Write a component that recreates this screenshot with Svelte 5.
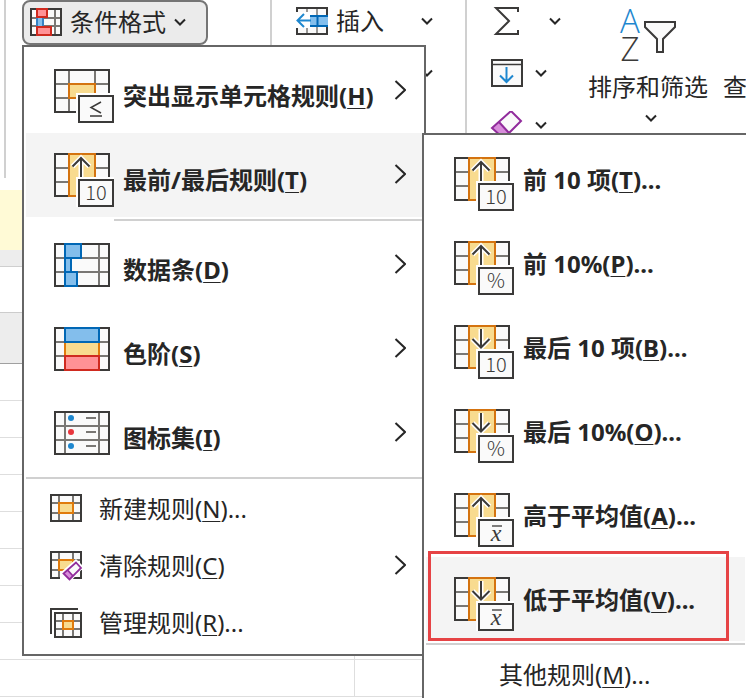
<script lang="ts">
  type IconName = string;

  interface MenuItem {
    id: string;
    label: string;
    key: string;
    suffix?: string;
    icon?: IconName;
    arrow?: 'up' | 'down';
    badge?: string;
    submenu?: boolean;
  }

  const galleryItems: MenuItem[] = [
    { id: 'highlight', label: '突出显示单元格规则', key: 'H', icon: 'highlight', badge: '≤', submenu: true },
    { id: 'top-bottom', label: '最前/最后规则', key: 'T', icon: 'rank', arrow: 'up', badge: '10', submenu: true },
    { id: 'data-bars', label: '数据条', key: 'D', icon: 'bars', submenu: true },
    { id: 'color-scales', label: '色阶', key: 'S', icon: 'scales', submenu: true },
    { id: 'icon-sets', label: '图标集', key: 'I', icon: 'sets', submenu: true },
  ];

  const manageItems: MenuItem[] = [
    { id: 'new', label: '新建规则', key: 'N', suffix: '...', icon: 'new' },
    { id: 'clear', label: '清除规则', key: 'C', icon: 'clear', submenu: true },
    { id: 'manage', label: '管理规则', key: 'R', suffix: '...', icon: 'manage' },
  ];

  const rankItems: MenuItem[] = [
    { id: 'top10', label: '前 10 项', key: 'T', suffix: '...', icon: 'rank', arrow: 'up', badge: '10' },
    { id: 'top10p', label: '前 10%', key: 'P', suffix: '...', icon: 'rank', arrow: 'up', badge: '%' },
    { id: 'bottom10', label: '最后 10 项', key: 'B', suffix: '...', icon: 'rank', arrow: 'down', badge: '10' },
    { id: 'bottom10p', label: '最后 10%', key: 'O', suffix: '...', icon: 'rank', arrow: 'down', badge: '%' },
    { id: 'above', label: '高于平均值', key: 'A', suffix: '...', icon: 'rank', arrow: 'up', badge: 'x' },
    { id: 'below', label: '低于平均值', key: 'V', suffix: '...', icon: 'rank', arrow: 'down', badge: 'x' },
  ];

  const moreRules: MenuItem = { id: 'more', label: '其他规则', key: 'M', suffix: '...' };

  const sheetRows = Array.from({ length: 9 }, (_, i) => i);

  let openId = $state('top-bottom');
  let hoveredId = $state('below');
  let menuOpen = $state(true);
</script>

{#snippet chevronDown()}
  <svg class="chevron-down" width="12" height="8" viewBox="0 0 12 8" aria-hidden="true">
    <path d="M1 1.5L6 6.5L11 1.5" fill="none" stroke="#262626" stroke-width="2" />
  </svg>
{/snippet}

{#snippet chevronRight()}
  <svg class="chevron-right" width="12" height="20" viewBox="0 0 12 20" aria-hidden="true">
    <path d="M1.5 1L11 10L1.5 19" fill="none" stroke="#262626" stroke-width="2" />
  </svg>
{/snippet}

{#snippet largeIcon(item: MenuItem)}
  <svg class="icon" width="60" height="54" viewBox="0 0 60 54" aria-hidden="true">
    <rect x="1" y="1" width="54" height="42" fill="#fafafa" />
    <path d="M1 15H55M1 29H55" stroke="#797774" stroke-width="2" />
    {#if item.icon === 'highlight' || item.icon === 'rank'}
      <path d="M15 1V43M41 1V43" stroke="#797774" stroke-width="2" />
    {:else}
      <path d="M11 1V43M45 1V43" stroke="#797774" stroke-width="2" />
    {/if}
    <rect x="1" y="1" width="54" height="42" fill="none" stroke="#3b3a39" stroke-width="2" />

    {#if item.icon === 'highlight'}
      <rect x="15" y="15" width="26" height="14" fill="#f8db8f" stroke="#d4730f" stroke-width="2" />
    {:else if item.icon === 'rank'}
      <rect x="15" y="1" width="26" height="42" fill="#f8db8f" stroke="#d4730f" stroke-width="2" />
      {@const arrowPath = item.arrow === 'up' ? 'M27 26V5M18.5 13.5L27 5L35.5 13.5' : 'M27 4V22M18.5 14L27 22.5L35.5 14'}
      <path d={arrowPath} fill="none" stroke="#ffffff" stroke-width="5" />
      <path d={arrowPath} fill="none" stroke="#3b3a39" stroke-width="2" />
    {:else if item.icon === 'bars'}
      <rect x="12" y="2" width="32" height="12" fill="#fafafa" />
      <g fill="#83beec" stroke="#0067b5" stroke-width="2">
        <rect x="11" y="1" width="16" height="14" />
        <rect x="11" y="15" width="6" height="14" />
        <rect x="11" y="29" width="12" height="14" />
      </g>
    {:else if item.icon === 'scales'}
      <rect x="11" y="15" width="34" height="14" fill="#f8db8f" stroke="#e07b0c" stroke-width="2" />
      <rect x="11" y="1" width="34" height="14" fill="#83beec" stroke="#0067b5" stroke-width="2" />
      <rect x="11" y="29" width="34" height="14" fill="#ff9296" stroke="#cf2a1f" stroke-width="2" />
    {:else if item.icon === 'sets'}
      <circle cx="17" cy="7" r="3" fill="#1e87cf" />
      <circle cx="17" cy="21" r="3" fill="#e8363d" />
      <circle cx="17" cy="35" r="3" fill="#1e87cf" />
      <path d="M32 7H42M32 21H42M32 35H42" stroke="#797774" stroke-width="2" />
    {/if}

    {#if item.badge}
      <rect class="badge-gap" x="22" y="24" width="38" height="30" />
      <rect x="25" y="27" width="34" height="26" fill="#fafafa" stroke="#3b3a39" stroke-width="2" />
      {#if item.badge === '≤'}
        <path d="M47 33L37 38.5L47 44M36 47H48" fill="none" stroke="#3b3a39" stroke-width="1.5" />
      {:else if item.badge === 'x'}
        <text class="badge-mean" x="42" y="48" text-anchor="middle">x</text>
        <path d="M38 33H48" stroke="#3b3a39" stroke-width="1.3" />
      {:else}
        <text class="badge-text" x="42" y="47" text-anchor="middle">{item.badge}</text>
      {/if}
    {/if}
  </svg>
{/snippet}

{#snippet smallIcon(name?: IconName)}
  <svg class="icon" width="32" height="30" viewBox="0 0 32 30" aria-hidden="true">
    {#if name === 'new' || name === 'clear'}
      <rect x="1" y="1" width="30" height="26" fill="#fafafa" />
      <path d="M9 1V27M23 1V27M1 9H31M1 19H31" stroke="#797774" stroke-width="2" />
      <rect x="1" y="1" width="30" height="26" fill="none" stroke="#3b3a39" stroke-width="2" />
      <rect x="9" y="9" width="14" height="10" fill="#f8db8f" stroke="#e07b0c" stroke-width="2" />
    {/if}
    {#if name === 'clear'}
      <path d="M26 8L34 16L20 31L10 28V22Z" fill="#ffffff" />
      <path d="M26 11.5L31 17L19.5 28.5L13.5 22.5Z" fill="#fafafa" />
      <path d="M17.5 19L23 25L19.5 28.5L13.5 22.5Z" fill="#d88ddb" />
      <path d="M26 11.5L31 17L19.5 28.5L13.5 22.5ZM17.5 19L23 25" fill="none" stroke="#912c9c" stroke-width="1.8" />
    {:else if name === 'manage'}
      <path d="M1 26V1H28" fill="none" stroke="#3b3a39" stroke-width="2" />
      <rect x="5" y="5" width="26" height="24" fill="#fafafa" />
      <path d="M13 5V29M23 5V29M5 13H31M5 21H31" stroke="#797774" stroke-width="2" />
      <rect x="5" y="5" width="26" height="24" fill="none" stroke="#3b3a39" stroke-width="2" />
      <rect x="13" y="13" width="10" height="8" fill="#f8db8f" stroke="#e07b0c" stroke-width="2" />
    {/if}
  </svg>
{/snippet}

{#snippet itemLabel(item: MenuItem)}
  <span class="label">{item.label}(<u>{item.key}</u>){item.suffix ?? ''}</span>
{/snippet}

<div class="window">
  <header class="ribbon">
    <div class="group styles-group">
      <div class="dropdown">
        <button type="button" class="format-button" aria-haspopup="menu" aria-expanded={menuOpen} onclick={() => (menuOpen = !menuOpen)}>
          <svg width="32" height="28" viewBox="0 0 32 28" aria-hidden="true">
            <rect x="1" y="1" width="30" height="26" fill="#fafafa" />
            <path d="M7 1V27M25 1V27M1 10H31M1 18H31" stroke="#797774" stroke-width="2" />
            <rect x="1" y="1" width="30" height="26" fill="none" stroke="#3b3a39" stroke-width="2" />
            <rect x="6" y="10" width="8" height="8" fill="#83beec" />
            <path d="M7 9V19M13 9V19" stroke="#1c6fb8" stroke-width="1.5" />
            <rect x="14" y="11" width="10" height="6" fill="#fafafa" />
            <rect x="7" y="1" width="10" height="8" fill="#ff9296" stroke="#cf2a1f" stroke-width="2" />
            <rect x="7" y="19" width="14" height="8" fill="#ff9296" stroke="#cf2a1f" stroke-width="2" />
          </svg>
          <span>条件格式</span>
          {@render chevronDown()}
        </button>

        {#if menuOpen}
          <ul class="menu main-menu" role="menu" aria-label="条件格式">
            {#each galleryItems as item}
              <li role="none">
                <button
                  type="button"
                  class="item large"
                  class:active={item.id === openId}
                  role="menuitem"
                  aria-haspopup="menu"
                  onclick={() => (openId = openId === item.id ? '' : item.id)}
                >
                  {@render largeIcon(item)}
                  {@render itemLabel(item)}
                  {@render chevronRight()}
                </button>

                {#if item.id === 'top-bottom' && openId === item.id}
                  <ul class="menu submenu" role="menu" aria-label={item.label}>
                    {#each rankItems as rule}
                      <li role="none">
                        <button
                          type="button"
                          class="item large"
                          class:active={rule.id === hoveredId}
                          role="menuitem"
                          onmouseenter={() => (hoveredId = rule.id)}
                        >
                          {@render largeIcon(rule)}
                          {@render itemLabel(rule)}
                        </button>
                        {#if rule.id === 'below'}
                          <span class="marker"></span>
                        {/if}
                      </li>
                    {/each}
                    <li class="divider" role="separator"></li>
                    <li role="none">
                      <button type="button" class="item small" role="menuitem">
                        {@render smallIcon()}
                        {@render itemLabel(moreRules)}
                      </button>
                    </li>
                  </ul>
                {/if}
              </li>
              {#if item.id === 'top-bottom'}
                <li class="divider inset" role="separator"></li>
              {/if}
            {/each}
            <li class="divider" role="separator"></li>
            {#each manageItems as item}
              <li role="none">
                <button type="button" class="item small" role="menuitem">
                  {@render smallIcon(item.icon)}
                  {@render itemLabel(item)}
                  {#if item.submenu}
                    {@render chevronRight()}
                  {/if}
                </button>
              </li>
            {/each}
          </ul>
        {/if}
      </div>
    </div>

    <div class="group cells-group">
      <button type="button" class="tool insert-tool">
        <svg width="32" height="28" viewBox="0 0 32 28" aria-hidden="true">
          <rect x="1" y="1" width="30" height="26" fill="#fafafa" />
          <path d="M11 1V27M21 1V27" stroke="#797774" stroke-width="1.5" />
          <rect x="1" y="1" width="30" height="26" fill="none" stroke="#3b3a39" stroke-width="2" />
          <path d="M0 5H16V21H0Z" fill="#ffffff" />
          <rect x="14" y="8" width="18" height="12" fill="#83beec" />
          <path d="M14 9H32M14 19H32M21.5 8V20" stroke="#0067b5" stroke-width="2" />
          <path d="M15 13.5H2M8 7L1.5 13.5L8 20" fill="none" stroke="#1e87cf" stroke-width="2" />
        </svg>
        <span>插入</span>
        {@render chevronDown()}
      </button>
      <button type="button" class="tool delete-tool" aria-label="Delete">
        {@render chevronDown()}
      </button>
    </div>

    <div class="group edit-group">
      <button type="button" class="tool sum-tool" aria-label="AutoSum">
        <svg width="32" height="28" viewBox="0 0 32 28" aria-hidden="true">
          <path d="M28 5V1H6L19 14L6 27H28V23" fill="none" stroke="#3b3a39" stroke-width="2" />
        </svg>
        {@render chevronDown()}
      </button>
      <button type="button" class="tool" aria-label="Fill">
        <svg width="33" height="28" viewBox="0 0 33 28" aria-hidden="true">
          <rect x="2" y="1" width="30" height="26" fill="#fafafa" stroke="#3b3a39" stroke-width="2" />
          <path d="M2 5.5H32" stroke="#3b3a39" stroke-width="1.5" />
          <path d="M16.5 8V23M10 16.5L16.5 23L23 16.5" fill="none" stroke="#1e87cf" stroke-width="2" />
        </svg>
        {@render chevronDown()}
      </button>
      <button type="button" class="tool" aria-label="Clear">
        <svg width="33" height="28" viewBox="0 0 33 28" aria-hidden="true">
          <path d="M21 0L31 10L15 26H12L2 17Z" fill="#fafafa" />
          <path d="M9 11L19 22L15 26H12L2 17Z" fill="#d88ddb" />
          <path d="M21 0L31 10L15 26H12L2 17ZM9 11L19 22" fill="none" stroke="#912c9c" stroke-width="2" />
        </svg>
        {@render chevronDown()}
      </button>
    </div>

    <button type="button" class="tall-tool">
      <svg class="sort-icon" width="60" height="56" viewBox="0 0 60 56" aria-hidden="true">
        <text class="sort-letter blue" x="12" y="26" text-anchor="middle">A</text>
        <text class="sort-letter" x="12" y="54" text-anchor="middle">Z</text>
        <path d="M27 15H57V20L45 32V45H39V32L27 20Z" fill="#fafafa" stroke="#3b3a39" stroke-width="2" />
      </svg>
      <span>排序和筛选</span>
      {@render chevronDown()}
    </button>
    <button type="button" class="tall-tool find-tool">
      <span>查找和选择</span>
    </button>
  </header>

  <div class="message-bar"></div>
  <div class="bar-gap"></div>
  <div class="formula-bar"></div>
  <div class="column-header"></div>
  <div class="sheet">
    {#each sheetRows as row (row)}
      <div class="sheet-row"><span class="cell"></span></div>
    {/each}
  </div>
</div>

<style>
  :global(body) {
    margin: 0;
    background: #ffffff;
  }

  .window {
    height: 100vh;
    overflow: hidden;
    background: #ffffff;
    color: #262626;
    font-family: 'Noto Sans', 'Noto Sans CJK SC', sans-serif;
    font-size: 24px;
    line-height: 32px;
  }

  button {
    margin: 0;
    padding: 0;
    border: none;
    background: none;
    color: inherit;
    font: inherit;
    text-align: left;
    white-space: nowrap;
    cursor: pointer;
  }

  svg {
    display: block;
    flex: none;
  }

  .ribbon {
    display: flex;
    align-items: stretch;
    height: 178px;
    padding-left: 4px;
  }

  .group {
    flex: none;
    border-left: 2px solid #d0d0d0;
  }

  .styles-group {
    padding: 0 62px 0 16px;
  }

  .dropdown {
    position: relative;
  }

  .format-button {
    display: flex;
    align-items: center;
    gap: 8px;
    box-sizing: border-box;
    height: 45px;
    padding: 0 20px 2px 6px;
    background: #ebebeb;
    border: 2px solid #757575;
    border-radius: 8px;
  }

  .cells-group {
    padding: 5px 32px 0 24px;
  }

  .tool {
    display: flex;
    align-items: center;
    gap: 12px;
    height: 32px;
    margin-bottom: 20px;
  }

  .insert-tool {
    gap: 8px;
  }

  .insert-tool .chevron-down {
    margin-left: 29px;
  }

  .delete-tool {
    width: 100%;
    justify-content: flex-end;
  }

  .edit-group {
    padding: 5px 27px 0 23px;
  }

  .sum-tool {
    gap: 27px;
  }

  .tall-tool {
    flex: none;
    display: flex;
    flex-direction: column;
    align-items: center;
    align-self: flex-start;
    padding-top: 7px;
    margin-right: 15px;
  }

  .tall-tool span {
    margin: 8px 0 11px;
  }

  .tall-tool .chevron-down {
    margin-left: 6px;
  }

  .find-tool {
    padding-top: 63px;
  }

  .sort-icon {
    overflow: visible;
  }

  .sort-letter {
    font-family: 'Open Sans', sans-serif;
    font-size: 33px;
    font-weight: 300;
    fill: #3b3a39;
  }

  .sort-letter.blue {
    fill: #1e87cf;
  }

  .menu {
    position: absolute;
    box-sizing: border-box;
    margin: 0;
    padding: 2px;
    list-style: none;
    background: #ffffff;
    border: 2px solid #666666;
  }

  .main-menu {
    top: 100%;
    left: 0;
    z-index: 10;
    min-width: 404px;
  }

  .submenu {
    top: 0;
    left: 100%;
    z-index: 11;
    min-width: 327px;
  }

  .menu li {
    position: relative;
  }

  .item {
    display: flex;
    align-items: center;
    box-sizing: border-box;
    width: 100%;
  }

  .item.large {
    gap: 9px;
    height: 84px;
    padding: 20px 16px 10px 28px;
    font-weight: 700;
  }

  .item.small {
    gap: 17px;
    height: 57px;
    padding: 0 16px 2px 24px;
  }

  .item.active {
    background: #f4f4f4;
  }

  .label {
    flex: 1;
  }

  .label u {
    text-decoration-thickness: 1px;
    text-underline-offset: 3px;
  }

  .submenu .large .label {
    padding-bottom: 8px;
  }

  .large .chevron-right {
    margin-bottom: 12px;
  }

  .small .chevron-right {
    margin-bottom: 2px;
  }

  .divider {
    height: 2px;
    margin: 2px 0;
    background: #d0d0d0;
  }

  .divider.inset {
    margin-left: 88px;
  }

  .marker {
    position: absolute;
    inset: -6px 16px 0 2px;
    border: 3px solid #e64345;
    pointer-events: none;
  }

  .badge-gap {
    fill: #ffffff;
  }

  .badge-text {
    font-family: 'Noto Sans CJK SC', sans-serif;
    font-size: 20px;
    font-weight: 300;
    fill: #3b3a39;
  }

  .badge-mean {
    font-family: 'Liberation Serif', serif;
    font-size: 24px;
    font-style: italic;
    font-weight: 400;
    fill: #3b3a39;
  }

  .message-bar {
    height: 60px;
    margin-top: 12px;
    background: #fffad6;
  }

  .bar-gap {
    height: 16px;
    background: #ededed;
    border-bottom: 1px solid #cfcfcf;
  }

  .formula-bar {
    height: 45px;
    border-bottom: 1px solid #cccccc;
  }

  .column-header {
    height: 50px;
    background: #ededed;
    border-bottom: 1px solid #a0a0a0;
  }

  .sheet-row {
    display: flex;
    height: 36px;
    border-bottom: 1px solid #dedede;
  }

  .cell {
    width: 354px;
    border-right: 1px solid #dedede;
  }
</style>
